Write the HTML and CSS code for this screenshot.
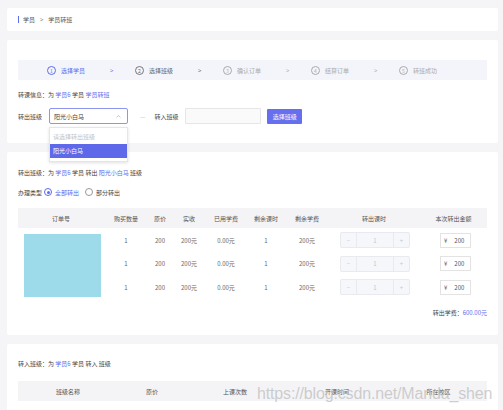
FILE: index.html
```html
<!DOCTYPE html>
<html lang="zh-CN">
<head>
    <meta charset="UTF-8">
    <meta name="viewport" content="width=device-width, initial-scale=1.0">
    <title>学员转班</title>
    <link rel="stylesheet" href="styles.css">
</head>
<body>
<div class="page">
    <div class="card crumb-card">
        <span class="crumb-bar"></span>
        <span>学员</span>
        <span class="crumb-sep">&gt;</span>
        <span>学员转班</span>
    </div>

    <div class="card step-card">
        <div class="steps">
            <div class="step-group">
                <div class="step active"><span class="num">1</span>选择学员</div>
                <span class="arrow active">&gt;</span>
            </div>
            <div class="step-group">
                <div class="step dark"><span class="num">2</span>选择班级</div>
                <span class="arrow dark">&gt;</span>
            </div>
            <div class="step-group">
                <div class="step"><span class="num">3</span>确认订单</div>
                <span class="arrow">&gt;</span>
            </div>
            <div class="step-group">
                <div class="step"><span class="num">4</span>结算订单</div>
                <span class="arrow">&gt;</span>
            </div>
            <div class="step-group">
                <div class="step"><span class="num">5</span>转班成功</div>
            </div>
        </div>

        <p class="info">转课信息：为 <span class="link">学员6</span> 学员 <span class="link">学员转班</span></p>

        <div class="form-row">
            <label class="form-label">转出班级</label>
            <div class="select-wrap">
                <div class="select">
                    <span>阳光小白马</span>
                    <svg class="caret" width="5" height="3" viewBox="0 0 10 6"><path d="M1 5L5 1L9 5" fill="none" stroke="#b4b4b4" stroke-width="1.4"/></svg>
                </div>
                <ul class="dropdown">
                    <li class="placeholder">请选择转出班级</li>
                    <li class="selected">阳光小白马</li>
                </ul>
            </div>
            <span class="dash">—</span>
            <label class="form-label">转入班级</label>
            <div class="text-input"></div>
            <button class="btn">选择班级</button>
        </div>
    </div>

    <div class="card out-card">
        <p class="info">转出班级：为 <span class="link">学员6</span> 学员 转出 <span class="link">阳光小白马</span> 班级</p>
        <div class="radio-row">
            <span class="form-label">办理类型</span>
            <span class="radio checked"></span><span class="link">全部转出</span>
            <span class="radio"></span><span>部分转出</span>
        </div>

        <table class="grid out-table">
            <colgroup>
                <col style="width:86px"><col style="width:44px"><col style="width:24px">
                <col style="width:34px"><col style="width:40px"><col style="width:40px">
                <col style="width:42px"><col style="width:92px"><col>
            </colgroup>
            <thead>
            <tr>
                <th>订单号</th><th>购买数量</th><th>原价</th><th>实收</th><th>已用学费</th>
                <th>剩余课时</th><th>剩余学费</th><th>转出课时</th><th>本次转出金额</th>
            </tr>
            </thead>
            <tbody>
            <tr class="r1">
                <td rowspan="3" class="pic-cell"><div class="pic"></div></td>
                <td>1</td><td>200</td><td>200元</td><td>0.00元</td><td>1</td><td>200元</td>
                <td><div class="stepper"><span>−</span><span>1</span><span>+</span></div></td>
                <td><div class="money"><span>¥</span><span>200</span></div></td>
            </tr>
            <tr class="r2">
                <td>1</td><td>200</td><td>200元</td><td>0.00元</td><td>1</td><td>200元</td>
                <td><div class="stepper"><span>−</span><span>1</span><span>+</span></div></td>
                <td><div class="money"><span>¥</span><span>200</span></div></td>
            </tr>
            <tr class="r3">
                <td>1</td><td>200</td><td>200元</td><td>0.00元</td><td>1</td><td>200元</td>
                <td><div class="stepper"><span>−</span><span>1</span><span>+</span></div></td>
                <td><div class="money"><span>¥</span><span>200</span></div></td>
            </tr>
            </tbody>
        </table>

        <p class="total">转出学费：<span class="link">600.00元</span></p>
    </div>

    <div class="card in-card">
        <p class="info">转入班级：为 <span class="link">学员6</span> 学员 转入 班级</p>
        <table class="grid in-table">
            <colgroup>
                <col style="width:100px"><col style="width:68px"><col style="width:98px">
                <col style="width:106px"><col>
            </colgroup>
            <thead>
            <tr><th>班级名称</th><th>原价</th><th>上课次数</th><th>开课时间</th><th>所在校区</th></tr>
            </thead>
        </table>
    </div>
</div>
<div class="watermark">https://blog.csdn.net/Manda_shen</div>
</body>
</html>
```

FILE: styles.css
```css
body {
    margin: 0;
    background: #f5f5f7;
    font-family: "Noto Sans CJK SC", "Noto Sans", sans-serif;
    font-size: 6px;
    color: #444;
    overflow: hidden;
}
.page {
    padding: 8px 5px 0 7px;
}
.card {
    background: #fff;
    border-radius: 2px;
    margin-bottom: 9px;
    padding: 0 11px;
}
.crumb-card {
    height: 23px;
    display: flex;
    align-items: center;
    gap: 5px;
    color: #555;
}
.crumb-bar {
    width: 1px;
    height: 7px;
    background: #5c6bf0;
    margin-right: -1px;
}
.crumb-sep {
    color: #777;
}
.step-card {
    padding-top: 20px;
    padding-bottom: 19px;
    position: relative;
    z-index: 2;
}
.steps {
    height: 20px;
    background: #f3f5fb;
    display: flex;
    align-items: center;
    padding-left: 29px;
}
.step-group {
    display: flex;
    align-items: center;
    width: 94px;
}
.step {
    width: 63px;
    display: flex;
    align-items: center;
    gap: 5px;
    color: #aaa;
}
.step .num {
    width: 7px;
    height: 7px;
    border: 0.6px solid #aaa;
    border-radius: 50%;
    font-size: 5px;
    display: flex;
    align-items: center;
    justify-content: center;
}
.step.active { color: #5c6bf0; }
.step.active .num { border-color: #5c6bf0; }
.step.dark { color: #666; }
.step.dark .num { border-color: #777; }
.arrow {
    color: #aaa;
    font-size: 6px;
}
.arrow.active { color: #5c6bf0; }
.arrow.dark { color: #666; }
.info {
    margin: 10px 0 0;
    line-height: 10px;
    color: #444;
}
.link {
    color: #5c6bf0;
}
.form-row {
    margin-top: 8px;
    height: 16px;
    display: flex;
    align-items: center;
}
.form-label {
    width: 31px;
    color: #444;
}
.select-wrap {
    position: relative;
    width: 79px;
    height: 16px;
}
.select {
    box-sizing: border-box;
    height: 16px;
    border: 1px solid #8d95ee;
    border-radius: 2px;
    display: flex;
    align-items: center;
    justify-content: space-between;
    padding: 0 6px 0 4px;
    color: #444;
}
.dropdown {
    position: absolute;
    top: 19px;
    left: 0;
    width: 79px;
    margin: 0;
    padding: 2px 0 3px;
    list-style: none;
    background: #fff;
    border: 1px solid #e6e6e6;
    box-sizing: border-box;
    box-shadow: 0 1px 3px rgba(0, 0, 0, 0.12);
}
.dropdown li {
    height: 14px;
    line-height: 14px;
    padding-left: 3px;
}
.dropdown .placeholder {
    color: #c2c2c2;
}
.dropdown .selected {
    background: #5d69e8;
    color: #fff;
}
.dash {
    color: #bbb;
    margin: 0 9px 0 12px;
}
.text-input {
    width: 76px;
    height: 16px;
    box-sizing: border-box;
    border: 1px solid #e6e6e6;
    background: #fafafa;
    border-radius: 1px;
}
.btn {
    margin-left: 6px;
    width: 35px;
    height: 15px;
    padding: 0;
    border: none;
    border-radius: 1px;
    background: #6670ee;
    color: #fff;
    font-family: inherit;
    font-size: 6px;
}
.out-card {
    padding-top: 6px;
    padding-bottom: 17px;
}
.radio-row {
    margin-top: 8px;
    height: 12px;
    display: flex;
    align-items: center;
}
.radio-row .form-label {
    width: 26px;
}
.radio {
    box-sizing: border-box;
    width: 8px;
    height: 8px;
    border-radius: 50%;
    border: 0.7px solid #999;
    margin-right: 3px;
    display: flex;
    align-items: center;
    justify-content: center;
}
.radio.checked {
    border-color: #5c6bf0;
}
.radio.checked::after {
    content: "";
    width: 3px;
    height: 3px;
    border-radius: 50%;
    background: #5c6bf0;
}
.radio-row .link {
    margin-right: 6px;
}
.grid {
    width: 100%;
    border-collapse: collapse;
    table-layout: fixed;
    margin-top: 10px;
}
.grid th {
    background: #f4f4f6;
    height: 20px;
    padding: 0;
    font-weight: normal;
    color: #555;
}
.grid td {
    padding: 0;
    text-align: center;
    color: #666;
}
.out-table .r1 td { height: 24px; }
.out-table .r2 td { height: 23px; }
.out-table .r3 td { height: 24px; }
.pic-cell {
    vertical-align: top;
}
.pic {
    width: 77px;
    height: 63px;
    margin: 6px 0 0 6px;
    background: #9ddaea;
}
.stepper {
    box-sizing: border-box;
    width: 70px;
    height: 16px;
    margin-left: 12px;
    display: flex;
    border: 1px solid #e8eaef;
    border-radius: 2px;
    background: #f5f7fa;
    color: #c4c7ce;
}
.stepper span {
    display: flex;
    align-items: center;
    justify-content: center;
}
.stepper span:first-child,
.stepper span:last-child {
    width: 15px;
}
.stepper span:first-child { border-right: 1px solid #e8eaef; }
.stepper span:last-child { border-left: 1px solid #e8eaef; }
.stepper span:nth-child(2) {
    flex: 1;
}
.money {
    box-sizing: border-box;
    width: 31px;
    height: 15px;
    margin-left: 20px;
    border: 1px solid #e3e3e3;
    display: flex;
    align-items: center;
    gap: 7px;
    padding-left: 3px;
    color: #555;
}
.total {
    margin: 9px 0 0;
    line-height: 10px;
    text-align: right;
    color: #444;
}
.in-card {
    padding-top: 5px;
    height: 80px;
}
.in-card .grid {
    margin-top: 12px;
}
.watermark {
    position: absolute;
    left: 257px;
    top: 385px;
    font-family: "Liberation Sans", Arial, sans-serif;
    font-size: 16px;
    color: rgba(190, 190, 190, 0.75);
    letter-spacing: -0.15px;
    white-space: nowrap;
}
```
